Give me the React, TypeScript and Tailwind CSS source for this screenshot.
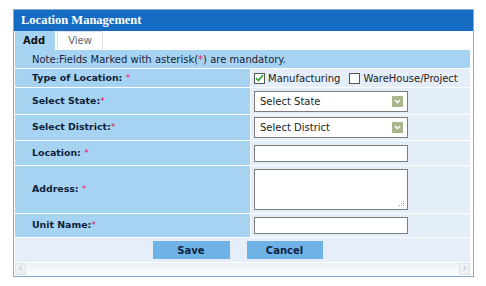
import React from "react";

const font = { fontFamily: '"DejaVu Sans", Verdana, sans-serif' };

function Star() {
  return <span className="text-[#e0245e] font-normal">*</span>;
}

function Label({ text, space = true }: { text: string; space?: boolean }) {
  return (
    <span className="text-[9.4px] font-bold text-[#0e1f3a]">
      {text}
      {space ? " " : ""}
      <Star />
    </span>
  );
}

function SelectBox({ text }: { text: string }) {
  return (
    <div className="w-[154px] h-[21px] border border-[#7c7c7c] bg-white flex items-center justify-between pl-[5px] pr-[4px]">
      <span className="text-[10px] text-[#222]">{text}</span>
      <span className="w-[11px] h-[11px] bg-[#a9b68c] flex items-center justify-center">
        <svg width="7" height="5" viewBox="0 0 7 5">
          <path d="M1 1 L3.5 3.5 L6 1" stroke="#fff" strokeWidth="1.4" fill="none" />
        </svg>
      </span>
    </div>
  );
}

function Row({ h, label, children }: { h: string; label: React.ReactNode; children?: React.ReactNode }) {
  return (
    <div className={`flex gap-px ${h}`}>
      <div className="w-[235px] bg-[#a7d3f3] flex items-center pl-[17px]">{label}</div>
      <div className="flex-1 bg-[#e4eef9] flex items-center pl-[3px]">{children}</div>
    </div>
  );
}

export default function App() {
  return (
    <div className="w-[486px] h-[286px] bg-white pt-[9px] pl-[13px]" style={font}>
      <div className="w-[461px] h-[268px] border border-[#86a9d2] flex flex-col">
        <div className="h-[22px] bg-[#166bc3] flex items-center pl-[7px]">
          <span
            className="text-white font-bold text-[12.5px]"
            style={{ fontFamily: '"Liberation Serif", "Times New Roman", serif' }}
          >
            Location Management
          </span>
        </div>
        <div className="h-[20px] flex pl-px gap-[2px]">
          <div className="w-[40px] bg-[#a7d3f3] flex items-center pl-[8px] text-[10px] font-bold text-[#111]">Add</div>
          <div className="w-[46px] bg-white border border-[#e2e2e2] border-b-0 flex items-center justify-center text-[10px] text-[#666]">
            View
          </div>
        </div>
        <div className="flex-1 flex flex-col pl-px pr-[3px] gap-px">
          <div className="h-[18px] bg-[#a7d3f3] flex items-center pl-[17px] text-[10px] text-[#1a2236]">
            Note:Fields Marked with asterisk(<Star />) are mandatory.
          </div>
          <Row h="h-[18px]" label={<Label text="Type of Location:" />}>
            <div className="flex items-center gap-[9px] text-[10px] text-[#222]">
              <span className="flex items-center gap-[3px]">
                <span className="w-[11px] h-[11px] border border-[#555] bg-white flex items-center justify-center">
                  <svg width="9" height="8" viewBox="0 0 9 8">
                    <path d="M1 4 L3.5 6.5 L8 1" stroke="#2aa02a" strokeWidth="1.6" fill="none" />
                  </svg>
                </span>
                Manufacturing
              </span>
              <span className="flex items-center gap-[3px]">
                <span className="w-[11px] h-[11px] border border-[#555] bg-white" />
                WareHouse/Project
              </span>
            </div>
          </Row>
          <Row h="h-[26px]" label={<Label text="Select State:" space={false} />}>
            <SelectBox text="Select State" />
          </Row>
          <Row h="h-[25px]" label={<Label text="Select District:" space={false} />}>
            <SelectBox text="Select District" />
          </Row>
          <Row h="h-[24px]" label={<Label text="Location:" />}>
            <div className="w-[154px] h-[17px] border border-[#7c7c7c] bg-white" />
          </Row>
          <Row h="h-[47px]" label={<Label text="Address:" />}>
            <div className="w-[154px] h-[41px] border border-[#7c7c7c] bg-white relative">
              <svg className="absolute right-[2px] bottom-[2px]" width="7" height="7" viewBox="0 0 7 7">
                <g fill="#a0a0a0">
                  <rect x="5" y="1" width="1" height="1" />
                  <rect x="3" y="3" width="1" height="1" />
                  <rect x="5" y="3" width="1" height="1" />
                  <rect x="1" y="5" width="1" height="1" />
                  <rect x="3" y="5" width="1" height="1" />
                  <rect x="5" y="5" width="1" height="1" />
                </g>
              </svg>
            </div>
          </Row>
          <Row h="h-[23px]" label={<Label text="Unit Name:" space={false} />}>
            <div className="w-[154px] h-[17px] border border-[#7c7c7c] bg-white" />
          </Row>
          <div className="h-[24px] bg-[#e6eff9] flex items-center justify-center gap-[17px] pr-[10px]">
            <button className="w-[77px] h-[18px] bg-[#6fb3e6] text-[10px] font-bold text-[#0d2340]">Save</button>
            <button className="w-[76px] h-[18px] bg-[#6fb3e6] text-[10px] font-bold text-[#0d2340]">Cancel</button>
          </div>
          <div className="flex-1 flex items-end justify-between bg-gradient-to-b from-[#eaf1f9] to-white pb-[1px]">
            <span className="w-[11px] h-[12px] bg-[#eef1f4] border border-[#dde3ea] flex items-center justify-center text-[9px] text-[#aab]">
              ‹
            </span>
            <span className="w-[11px] h-[12px] bg-[#eef1f4] border border-[#dde3ea] flex items-center justify-center text-[9px] text-[#aab]">
              ›
            </span>
          </div>
        </div>
      </div>
    </div>
  );
}
